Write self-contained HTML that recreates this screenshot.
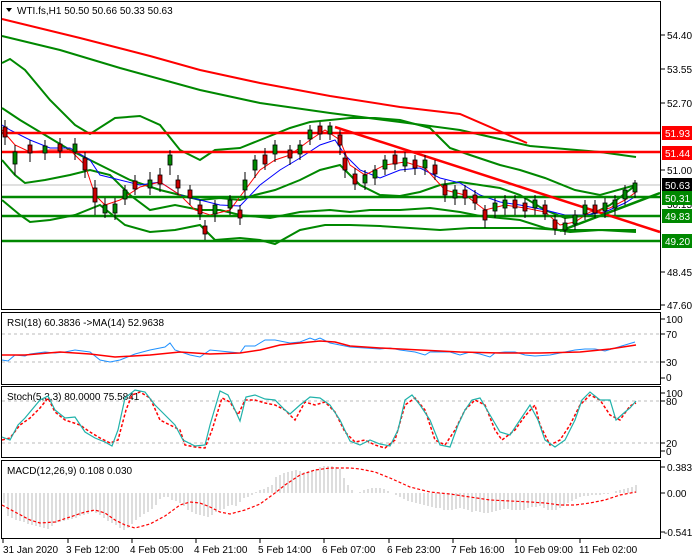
<!DOCTYPE html>
<html><head><meta charset="utf-8"><style>
body{margin:0;background:#fff;width:700px;height:560px;overflow:hidden}
svg{display:block;font-family:"Liberation Sans",Tahoma,sans-serif}
text{font-size:10px;fill:#000}
</style></head><body>
<svg width="700" height="560" viewBox="0 0 700 560">
<g fill="none" stroke="#000" stroke-width="1">
<rect x="1.5" y="1.5" width="659" height="308"/>
<rect x="1.5" y="312.5" width="659" height="72"/>
<rect x="1.5" y="386.5" width="659" height="71"/>
<rect x="1.5" y="460.5" width="659" height="78"/>
</g>
<g stroke="#000">
<line x1="661" y1="35" x2="665" y2="35"/><line x1="661" y1="69" x2="665" y2="69"/><line x1="661" y1="103" x2="665" y2="103"/><line x1="661" y1="170" x2="665" y2="170"/><line x1="661" y1="272" x2="665" y2="272"/><line x1="661" y1="305" x2="665" y2="305"/>
</g>
<g>
<text x="667" y="39">54.40</text><text x="667" y="73">53.55</text><text x="667" y="107">52.70</text><text x="667" y="174">51.00</text><text x="667" y="208">50.15</text><text x="667" y="276">48.45</text><text x="667" y="309">47.60</text>
</g>
<path d="M6 8 L12 8 L9 12 Z" fill="#000"/>
<text x="17" y="14">WTI.fs,H1  50.50 50.66 50.33 50.63</text>
<line x1="2" y1="185" x2="660" y2="185" stroke="#c0c0c0"/>
<polyline fill="none" stroke="#f00" stroke-width="2" points="2,19 80,38 150,56 200,70 260,83 330,96 400,107 460,114 527,143"/>
<polyline fill="none" stroke="#080" stroke-width="2" points="2,36 60,50 120,68 200,90 260,103 330,113 400,122 460,130 530,146 600,152 636,157"/>
<polyline fill="none" stroke="#080" stroke-width="2" points="2,63 10,59 25,70 50,100 75,125 90,134 115,118 140,116 160,125 180,150 200,160 215,150 240,148 265,138 290,128 310,122 330,120 350,118 375,118 400,120 430,128 450,148 470,155 500,165 520,170 545,178 575,190 600,195 636,185"/>
<polyline fill="none" stroke="#080" stroke-width="2" points="2,108 20,120 45,135 70,150 90,160 110,170 130,180 160,190 180,195 200,200 220,198 240,200 255,195 275,190 300,180 320,170 340,165 360,185 380,195 400,196 420,192 440,185 460,182 480,185 500,188 520,195 545,210 565,218 590,215 610,205 636,185"/>
<polyline fill="none" stroke="#080" stroke-width="2" points="2,160 15,175 25,183 45,180 70,175 90,170 110,175 130,195 150,210 175,205 200,210 220,210 240,215 270,218 300,212 330,210 350,212 370,210 400,210 430,208 460,212 480,216 500,218 520,220 545,228 570,232 600,230 636,232"/>
<polyline fill="none" stroke="#080" stroke-width="2" points="2,200 20,215 30,222 50,220 75,215 100,205 125,225 150,232 175,230 200,225 215,240 240,238 260,240 275,244 300,230 325,225 350,225 380,226 410,228 440,230 470,228 500,228 530,228 560,230 600,230 636,230"/>
<polyline fill="none" stroke="#00f" stroke-width="1" points="2,125 10,130 30,140 50,148 70,148 90,160 100,175 120,180 140,185 160,182 180,195 200,200 220,205 240,206 260,185 280,170 300,158 320,145 335,140 345,155 360,170 380,178 400,170 420,168 440,178 460,183 480,195 500,202 520,205 545,210 565,215 585,215 605,212 625,203 636,196"/>
<polyline fill="none" stroke="#f00" stroke-width="1" points="2,130 15,145 30,152 50,150 70,150 85,165 95,195 105,205 120,200 140,187 160,182 180,195 195,210 210,215 230,210 245,190 260,170 275,160 290,155 310,140 325,130 340,140 350,165 365,175 385,165 405,162 425,168 445,190 465,195 485,210 505,205 525,208 545,212 560,225 575,222 590,212 610,208 625,200 636,192"/>
<g stroke-width="2.5">
<line x1="2" y1="133" x2="660" y2="133" stroke="#f00"/>
<line x1="2" y1="152" x2="660" y2="152" stroke="#f00"/>
<line x1="2" y1="197" x2="660" y2="197" stroke="#080"/>
<line x1="2" y1="216" x2="660" y2="216" stroke="#080"/>
<line x1="2" y1="241" x2="660" y2="241" stroke="#080"/>
</g>
<line x1="335" y1="127" x2="660" y2="232" stroke="#f00" stroke-width="2.5"/>
<line x1="560" y1="231" x2="660" y2="193" stroke="#080" stroke-width="2.5"/>
<g stroke="#000">
<path d="M5 120V145M15 145V175M30 140V162M45 140V160M60 138V158M75 138V160M85 152V178M95 180V215M105 198V218M115 198V220M125 185V205M135 175V195M150 172V195M160 168V192M170 150V175M178 175V195M190 185V205M200 200V220M205 220V240M215 200V222M230 195V215M240 205V225M245 172V198M255 155V178M265 148V170M275 140V162M290 145V165M300 140V160M310 125V145M320 122V140M330 122V140M340 130V155M345 152V178M355 168V190M365 170V190M375 165V185M385 155V175M395 150V170M405 152V172M415 155V175M425 155V175M435 160V180M445 180V202M455 185V205M465 185V205M475 190V210M485 205V228M495 198V218M505 195V215M515 195V215M525 198V218M535 195V215M545 200V220M555 215V235M565 218V235M575 210V230M585 200V220M595 200V218M605 198V218M615 195V215M625 185V205M635 180V198"/>
</g>
<g stroke="#000" stroke-width="0.8">
<rect x="3" y="127" width="4" height="10" fill="#c00"/><rect x="13" y="152" width="4" height="12" fill="#080"/><rect x="28" y="145" width="4" height="8" fill="#c00"/><rect x="43" y="146" width="4" height="7" fill="#080"/><rect x="58" y="144" width="4" height="7" fill="#c00"/><rect x="73" y="144" width="4" height="8" fill="#080"/><rect x="83" y="158" width="4" height="12" fill="#c00"/><rect x="93" y="188" width="4" height="14" fill="#c00"/><rect x="103" y="205" width="4" height="8" fill="#080"/><rect x="113" y="204" width="4" height="9" fill="#080"/><rect x="123" y="190" width="4" height="9" fill="#080"/><rect x="133" y="181" width="4" height="8" fill="#c00"/><rect x="148" y="180" width="4" height="8" fill="#080"/><rect x="158" y="175" width="4" height="9" fill="#c00"/><rect x="168" y="155" width="4" height="10" fill="#080"/><rect x="176" y="180" width="4" height="8" fill="#c00"/><rect x="188" y="190" width="4" height="8" fill="#c00"/><rect x="198" y="205" width="4" height="9" fill="#c00"/><rect x="203" y="226" width="4" height="8" fill="#c00"/><rect x="213" y="205" width="4" height="9" fill="#080"/><rect x="228" y="200" width="4" height="8" fill="#080"/><rect x="238" y="210" width="4" height="8" fill="#c00"/><rect x="243" y="180" width="4" height="10" fill="#080"/><rect x="253" y="160" width="4" height="10" fill="#080"/><rect x="263" y="155" width="4" height="9" fill="#c00"/><rect x="273" y="145" width="4" height="9" fill="#080"/><rect x="288" y="150" width="4" height="8" fill="#c00"/><rect x="298" y="145" width="4" height="9" fill="#080"/><rect x="308" y="130" width="4" height="9" fill="#080"/><rect x="318" y="126" width="4" height="8" fill="#c00"/><rect x="328" y="126" width="4" height="8" fill="#080"/><rect x="338" y="135" width="4" height="10" fill="#c00"/><rect x="343" y="158" width="4" height="12" fill="#c00"/><rect x="353" y="174" width="4" height="10" fill="#c00"/><rect x="363" y="175" width="4" height="8" fill="#080"/><rect x="373" y="170" width="4" height="8" fill="#080"/><rect x="383" y="160" width="4" height="9" fill="#080"/><rect x="393" y="155" width="4" height="9" fill="#c00"/><rect x="403" y="158" width="4" height="8" fill="#080"/><rect x="413" y="160" width="4" height="8" fill="#c00"/><rect x="423" y="160" width="4" height="8" fill="#080"/><rect x="433" y="165" width="4" height="9" fill="#c00"/><rect x="443" y="185" width="4" height="10" fill="#c00"/><rect x="453" y="190" width="4" height="8" fill="#080"/><rect x="463" y="190" width="4" height="8" fill="#c00"/><rect x="473" y="195" width="4" height="8" fill="#c00"/><rect x="483" y="210" width="4" height="10" fill="#c00"/><rect x="493" y="203" width="4" height="8" fill="#080"/><rect x="503" y="200" width="4" height="8" fill="#080"/><rect x="513" y="200" width="4" height="8" fill="#c00"/><rect x="523" y="203" width="4" height="8" fill="#c00"/><rect x="533" y="200" width="4" height="8" fill="#080"/><rect x="543" y="205" width="4" height="9" fill="#c00"/><rect x="553" y="220" width="4" height="9" fill="#c00"/><rect x="563" y="223" width="4" height="7" fill="#080"/><rect x="573" y="215" width="4" height="9" fill="#080"/><rect x="583" y="205" width="4" height="9" fill="#080"/><rect x="593" y="205" width="4" height="8" fill="#c00"/><rect x="603" y="203" width="4" height="8" fill="#080"/><rect x="613" y="200" width="4" height="8" fill="#080"/><rect x="623" y="190" width="4" height="9" fill="#080"/><rect x="633" y="183" width="4" height="9" fill="#080"/>
</g>
<g font-size="10">
<rect x="662" y="126" width="30" height="14" fill="#f00"/><text x="665" y="137" style="fill:#fff">51.93</text>
<rect x="662" y="146" width="30" height="14" fill="#f00"/><text x="665" y="157" style="fill:#fff">51.44</text>
<rect x="662" y="178" width="30" height="14" fill="#000"/><text x="665" y="189" style="fill:#fff">50.63</text>
<rect x="662" y="191" width="30" height="14" fill="#080"/><text x="665" y="202" style="fill:#fff">50.31</text>
<rect x="662" y="209" width="30" height="14" fill="#080"/><text x="665" y="220" style="fill:#fff">49.83</text>
<rect x="662" y="234" width="30" height="14" fill="#080"/><text x="665" y="245" style="fill:#fff">49.20</text>
</g>
<text x="7" y="326">RSI(18) 60.3836  -&gt;MA(14) 52.9638</text>
<g stroke="#bbb" stroke-dasharray="3,3"><line x1="2" y1="334" x2="660" y2="334"/><line x1="2" y1="362" x2="660" y2="362"/></g>
<polyline fill="none" stroke="#1e90ff" points="2,360 8,361 15,355 25,356 30,354 45,352 55,353 65,352 75,350 90,352 95,356 100,360 110,362 120,360 135,354 150,350 165,347 170,343 175,350 190,355 200,357 210,350 220,351 230,352 240,353 245,346 255,346 265,340 275,340 290,343 300,342 310,338 315,340 320,338 330,343 340,345 350,347 365,348 380,349 390,348 400,350 415,352 425,355 430,352 440,352 450,352 460,355 470,352 480,354 490,357 495,353 505,352 515,352 525,355 535,356 550,355 565,352 575,350 585,349 595,349 605,351 615,348 625,345 635,342"/>
<polyline fill="none" stroke="#f00" stroke-width="1.5" points="2,355 25,355 60,352 90,354 115,357 150,355 180,352 210,354 240,353 260,350 280,345 300,343 320,341 335,342 350,346 380,348 420,350 460,352 500,353 540,353 580,352 610,349 636,345"/>
<g stroke="#000"><line x1="661" y1="319" x2="665" y2="319"/><line x1="661" y1="334" x2="665" y2="334"/><line x1="661" y1="362" x2="665" y2="362"/><line x1="661" y1="378" x2="665" y2="378"/></g>
<text x="666" y="323">100</text><text x="666" y="338">70</text><text x="666" y="366">30</text><text x="666" y="381">0</text>
<text x="7" y="400">Stoch(5,3,3) 80.0000 75.5841</text>
<g stroke="#bbb" stroke-dasharray="3,3"><line x1="2" y1="401" x2="660" y2="401"/><line x1="2" y1="443" x2="660" y2="443"/></g>
<polyline fill="none" stroke="#f00" stroke-width="1.5" stroke-dasharray="3,2" points="2,440 10,438 20,425 30,418 40,408 48,398 55,412 65,420 80,425 90,432 100,438 110,443 118,440 126,410 132,395 140,392 150,398 160,420 170,425 180,430 185,445 195,447 205,448 212,430 222,398 230,402 238,415 245,400 255,400 265,403 275,405 285,410 295,420 305,402 315,405 325,402 335,412 345,432 355,442 365,440 375,445 385,448 395,440 405,405 415,398 425,410 435,440 445,445 455,430 465,410 475,400 485,405 495,430 502,440 515,430 525,416 535,405 540,425 550,445 560,440 570,425 580,405 590,395 600,400 610,415 620,420 630,406 636,403"/>
<polyline fill="none" stroke="#20b2aa" stroke-width="1.2" points="2,437 10,440 18,425 25,418 40,400 48,396 55,410 65,418 75,417 85,432 95,438 105,442 112,446 118,430 125,398 135,390 145,392 155,405 165,415 175,425 183,440 195,446 205,445 210,425 220,391 228,395 235,410 240,421 246,397 255,395 265,399 275,400 285,410 290,414 300,405 310,397 320,398 330,405 340,420 350,441 360,445 370,440 380,444 390,446 398,430 405,400 412,395 420,405 430,420 440,445 450,447 458,425 465,410 472,400 480,398 490,415 500,432 510,435 520,420 530,405 538,420 545,440 555,447 565,440 575,420 582,400 590,392 600,400 610,400 616,420 625,412 630,408 636,401"/>
<g stroke="#000"><line x1="661" y1="393" x2="665" y2="393"/><line x1="661" y1="401" x2="665" y2="401"/><line x1="661" y1="443" x2="665" y2="443"/><line x1="661" y1="451" x2="665" y2="451"/></g>
<text x="666" y="397">100</text><text x="666" y="405">80</text><text x="666" y="447">20</text><text x="666" y="455">0</text>
<text x="7" y="474">MACD(12,26,9) 0.108 0.030</text>
<path stroke="#bbb" stroke-width="1" d="M4 493V503M8 493V516M12 493V518M16 493V520M20 493V521M24 493V522M28 493V524M32 493V525M36 493V526M40 493V527M44 493V528M48 493V529M52 493V526M56 493V523M60 493V522M64 493V521M68 493V520M72 493V519M76 493V518M80 493V516M84 493V515M88 493V514M92 493V512M96 493V513M100 493V515M104 493V518M108 493V521M112 493V523M116 493V525M120 493V528M124 493V530M128 493V528M132 493V524M136 493V520M140 493V517M144 493V514M148 493V512M152 493V509M156 493V505M160 493V499M164 493V497M168 493V497M172 493V500M176 493V501M180 493V503M184 493V506M188 493V510M192 493V512M196 493V514M200 493V515M204 493V516M208 493V517M212 493V515M216 493V512M220 493V510M224 493V509M228 493V506M232 493V505M236 493V506M240 493V502M244 493V498M248 493V497M252 493V495M256 493V492M260 493V490M264 493V489M268 493V487M272 493V485M276 493V477M280 493V475M284 493V473M288 493V472M292 493V471M296 493V470M300 493V471M304 493V472M308 493V471M312 493V470M316 493V469M320 493V467M324 493V466M328 493V466M332 493V466M336 493V467M340 493V469M344 493V478M348 493V485M352 493V490M356 493V493M360 493V492M364 493V490M368 493V489M372 493V488M376 493V488M380 493V488M384 493V489M388 493V491M392 493V493M396 493V495M400 493V497M404 493V499M408 493V501M412 493V502M416 493V503M420 493V504M424 493V505M428 493V506M432 493V507M436 493V508M440 493V508M444 493V510M448 493V510M452 493V510M456 493V509M460 493V508M464 493V509M468 493V510M472 493V512M476 493V511M480 493V512M484 493V513M488 493V513M492 493V512M496 493V511M500 493V510M504 493V509M508 493V509M512 493V510M516 493V510M520 493V510M524 493V510M528 493V508M532 493V507M536 493V507M540 493V506M544 493V508M548 493V510M552 493V510M556 493V510M560 493V508M564 493V506M568 493V503M572 493V501M576 493V499M580 493V497M584 493V496M588 493V496M592 493V495M596 493V495M600 493V495M604 493V494M608 493V494M612 493V493M616 493V491M620 493V490M624 493V489M628 493V488M632 493V487M636 493V485"/>
<polyline fill="none" stroke="#f00" stroke-width="1.2" stroke-dasharray="3,2" points="2,505 15,512 30,520 40,523 55,522 70,517 85,512 95,510 105,513 115,520 125,525 135,528 150,524 165,516 180,505 190,502 200,503 210,507 220,512 230,514 245,510 260,504 275,493 285,485 300,475 315,470 330,468 340,468 350,468 360,469 375,472 390,478 410,487 430,492 450,494 470,497 490,500 510,501 530,502 545,503 560,505 575,505 590,503 605,500 620,495 636,492"/>
<g stroke="#000"><line x1="661" y1="467" x2="665" y2="467"/><line x1="661" y1="493" x2="665" y2="493"/><line x1="661" y1="532" x2="665" y2="532"/></g>
<text x="667" y="471">0.383</text><text x="667" y="497">0.00</text><text x="664" y="536">-0.541</text>
<g stroke="#000"><path d="M3 539V543M68 539V543M132 539V543M196 539V543M260 539V543M324 539V543M389 539V543M453 539V543M516 539V543M580 539V543"/></g>
<g>
<text x="3" y="553">31 Jan 2020</text><text x="66" y="553">3 Feb 12:00</text><text x="130" y="553">4 Feb 05:00</text><text x="194" y="553">4 Feb 21:00</text><text x="258" y="553">5 Feb 14:00</text><text x="322" y="553">6 Feb 07:00</text><text x="387" y="553">6 Feb 23:00</text><text x="451" y="553">7 Feb 16:00</text><text x="514" y="553">10 Feb 09:00</text><text x="579" y="553">11 Feb 02:00</text>
</g>
</svg>
</body></html>
